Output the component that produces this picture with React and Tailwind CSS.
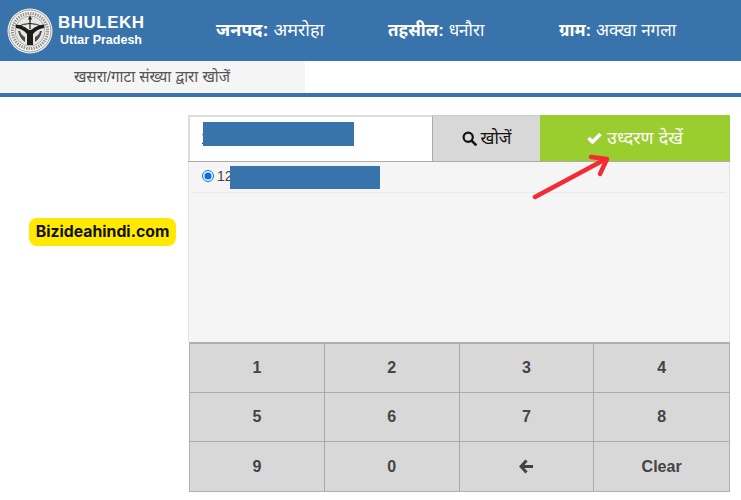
import React from "react";

const deva = "font-['Liberation_Sans','Noto_Sans','Noto_Sans_Devanagari','Lohit_Devanagari','FreeSans',sans-serif]";

function Logo() {
  return (
    <svg width="46" height="46" viewBox="0 0 46 46" className="shrink-0">
      <circle cx="23" cy="23" r="22.5" fill="#f4f4f2" />
      <circle cx="23" cy="23" r="21" fill="none" stroke="#777" strokeWidth="0.7" />
      <circle cx="23" cy="23" r="17.6" fill="none" stroke="#666" strokeWidth="3" strokeDasharray="1.4 1.1" opacity="0.7" />
      <circle cx="23" cy="23" r="15" fill="#e6e6e3" stroke="#777" strokeWidth="0.6" />
      <path d="M10 19 Q23 12 36 19" fill="none" stroke="#1c1c1c" strokeWidth="1" />
      <path d="M8.5 16.5 Q16 17 20.5 21 Q23 23 25.5 21 Q30 17 37.5 16.5 L37 20 Q30 21 26 26 L26 37 L20 37 L20 26 Q16 21 9 20 Z" fill="#1c1c1c" />
      <path d="M23 9 L23 21" stroke="#1c1c1c" strokeWidth="1.2" />
      <path d="M21 11.5 L23 7.5 L25 11.5 Z" fill="#1c1c1c" />
      <path d="M11 23 Q13 31 18 34 L18 29 Q14 27 13 23 Z" fill="#4a4a4a" />
      <path d="M35 23 Q33 31 28 34 L28 29 Q32 27 33 23 Z" fill="#4a4a4a" />
    </svg>
  );
}

function SearchIcon() {
  return (
    <svg width="15" height="15" viewBox="0 0 15 15" className="shrink-0">
      <circle cx="6.2" cy="6.2" r="4.6" fill="none" stroke="#111" strokeWidth="2.2" />
      <path d="M9.6 9.6 L13.6 13.6" stroke="#111" strokeWidth="2.6" strokeLinecap="round" />
    </svg>
  );
}

function CheckIcon() {
  return (
    <svg width="15" height="12" viewBox="0 0 15 12" className="shrink-0">
      <path d="M1.5 6 L5.5 10 L13.5 2" fill="none" stroke="#fff" strokeWidth="3.6" strokeLinejoin="round" />
    </svg>
  );
}

function BackArrow() {
  return (
    <svg width="15" height="15" viewBox="0 0 15 15">
      <path d="M7.5 1.5 L2 7.5 L7.5 13.5 M3 7.5 L14 7.5" fill="none" stroke="#444" strokeWidth="3" />
    </svg>
  );
}

const keys = ["1", "2", "3", "4", "5", "6", "7", "8", "9", "0", "back", "Clear"];

export default function App() {
  return (
    <div className={`w-[741px] h-[500px] overflow-hidden bg-white ${deva}`}>
      <header className="h-[61px] bg-[#3873ab] flex items-center text-white">
        <div className="w-[216px] pl-[7px] flex items-center gap-[5px] shrink-0">
          <Logo />
          <div className="flex flex-col font-['Liberation_Sans',sans-serif] font-bold">
            <span className="text-[17px] leading-[20px] tracking-[0.5px]">BHULEKH</span>
            <span className="text-[12.5px] leading-[15px] pl-[2px]">Uttar Pradesh</span>
          </div>
        </div>
        <div className="flex items-center text-[17px]">
          <span className="w-[172px] text-[18px]"><b>जनपद:</b> अमरोहा</span>
          <span className="w-[171px]"><b>तहसील:</b> धनौरा</span>
          <span><b>ग्राम:</b> अक्खा नगला</span>
        </div>
      </header>
      <div className="h-[36px] border-b-4 border-[#3873ab]">
        <div className="w-[305px] h-[32px] bg-[#f5f5f5] text-[#555] text-[15.2px] flex items-center justify-center pr-[1px]">
          खसरा/गाटा संख्या द्वारा खोजें
        </div>
      </div>
      <main className="flex pt-[18px]">
        <div className="w-[188px] shrink-0 pt-[103px] pl-[29px]">
          <div className="w-[147px] h-[28px] rounded-[8px] bg-[#ffe900] flex items-center justify-center text-[15.8px] font-bold text-[#111] font-['Inter',sans-serif]">
            Bizideahindi.com
          </div>
        </div>
        <div className="w-[542px] relative">
          <div className="flex h-[47px] border-b border-[#aaa]">
            <div className="w-[245px] border-2 border-b-0 border-r border-[#ddd] border-r-[#aaa] relative flex items-center pl-[11px] text-[16px] text-black">
              1
              <div className="absolute left-[13px] top-[5px] w-[151px] h-[24px] bg-[#3873ab]" />
            </div>
            <div className="w-[107px] bg-[#d8d8d8] border-t border-[#ccc] flex items-center justify-center gap-[4px] text-[17px] text-[#111]">
              <SearchIcon />
              खोजें
            </div>
            <div className="w-[190px] bg-[#9acd2e] flex items-center justify-center gap-[5px] text-[18px] text-white">
              <CheckIcon />
              उध्दरण देखें
            </div>
          </div>
          <div className="h-[180px] bg-[#f5f5f5] border-x border-[#e4e4e4] px-[3px]">
            <div className="h-[31px] border-b border-[#e8e8e8] flex items-center pl-[10px] pb-[2px] gap-[3px] text-[14px] text-[#444] relative font-['Liberation_Sans',sans-serif]">
              <input type="radio" defaultChecked readOnly className="w-[12px] h-[12px] m-0 accent-[#0a6cf0]" />
              12
              <div className="absolute left-[38px] top-[4px] w-[150px] h-[23px] bg-[#3873ab]" />
            </div>
          </div>
          <div className="ml-[1px] w-[541px] grid grid-cols-4 border border-t-2 border-[#b0b0b0] bg-[#d8d8d8]">
            {keys.map((k, i) => (
              <div
                key={k}
                className={`h-[49px] flex items-center justify-center text-[16px] font-bold text-[#444] font-['Liberation_Sans',sans-serif] border-[#aaa] ${i % 4 !== 3 ? "border-r" : ""} ${i < 8 ? "border-b" : ""}`}
              >
                {k === "back" ? <BackArrow /> : k}
              </div>
            ))}
          </div>
          <svg className="absolute left-[344px] top-[35px]" width="90" height="55" viewBox="0 0 90 55">
            <path d="M3 47 L72 10" stroke="#f42a35" strokeWidth="4.5" strokeLinecap="round" />
            <path d="M59 7 L75 9 L68 24" fill="none" stroke="#f42a35" strokeWidth="4.5" strokeLinecap="round" strokeLinejoin="round" />
          </svg>
        </div>
      </main>
    </div>
  );
}
